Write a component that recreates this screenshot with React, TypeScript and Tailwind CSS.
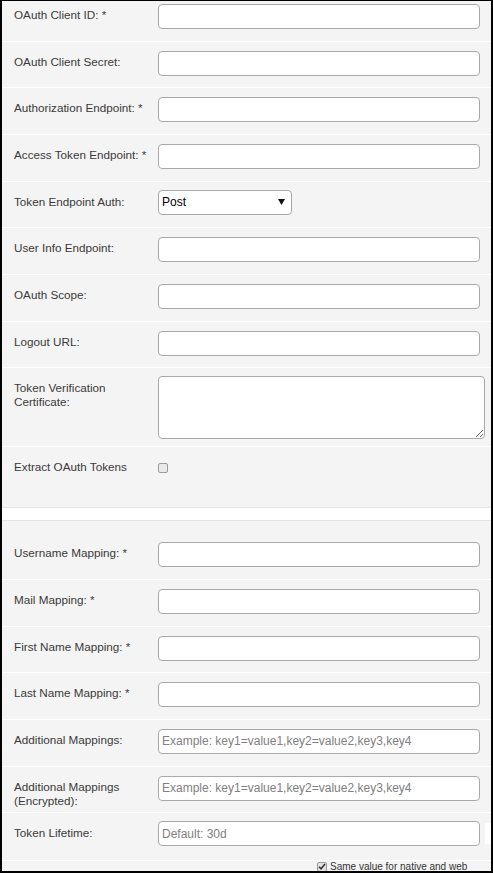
import React from "react";

type Field = {
  label: React.ReactNode;
  placeholder?: string;
};

const topFields: Field[] = [
  { label: "OAuth Client ID: *" },
  { label: "OAuth Client Secret:" },
  { label: "Authorization Endpoint: *" },
  { label: "Access Token Endpoint: *" },
];

const midFields: Field[] = [
  { label: "User Info Endpoint:" },
  { label: "OAuth Scope:" },
  { label: "Logout URL:" },
];

const mappingFields: Field[] = [
  { label: "Username Mapping: *" },
  { label: "Mail Mapping: *" },
  { label: "First Name Mapping: *" },
  { label: "Last Name Mapping: *" },
  {
    label: "Additional Mappings:",
    placeholder: "Example: key1=value1,key2=value2,key3,key4",
  },
  {
    label: (
      <>
        Additional Mappings
        <br />
        (Encrypted):
      </>
    ),
    placeholder: "Example: key1=value1,key2=value2,key3,key4",
  },
];

function Label({ children }: { children: React.ReactNode }) {
  return (
    <div className="w-[156px] shrink-0 pl-[12px] pr-2 pt-[13px] text-[11.7px] leading-[14px] text-[#3a3a3a]">
      {children}
    </div>
  );
}

function TextRow({ label, placeholder }: Field) {
  return (
    <div className="flex h-[46.67px] items-start border-b border-white">
      <Label>{label}</Label>
      <input
        type="text"
        placeholder={placeholder}
        className="mt-[9px] h-[25px] w-[322px] rounded-[4px] border border-[#a9a9a9] bg-white px-[3px] text-[12px] text-black outline-none placeholder:text-[#808080]"
      />
    </div>
  );
}

export default function App() {
  return (
    <div
      className="h-[873px] w-[493px] overflow-hidden border-b-2 border-l-2 border-r-2 border-t border-black bg-white"
      style={{ fontFamily: '"Liberation Sans", Arial, sans-serif' }}
    >
      <div className="-mt-[6px]">
        {/* first panel */}
        <section className="border-b border-[#e4e4e4] bg-[#f4f4f4]">
          {topFields.map((f, i) => (
            <TextRow key={i} {...f} />
          ))}

          <div className="flex h-[46.67px] items-start border-b border-white">
            <Label>Token Endpoint Auth:</Label>
            <div className="mt-[8px] flex h-[25px] w-[134px] items-center justify-between rounded-[4px] border border-[#a9a9a9] bg-white pl-[3px] pr-[6px] text-[12px] text-black">
              <span>Post</span>
              <svg width="7" height="6" viewBox="0 0 7 6">
                <path d="M0 0h7L3.5 6z" fill="#111" />
              </svg>
            </div>
          </div>

          {midFields.map((f, i) => (
            <TextRow key={i} {...f} />
          ))}

          <div className="flex h-[79px] items-start border-b border-white">
            <Label>
              Token Verification
              <br />
              Certificate:
            </Label>
            <textarea className="mt-[8px] h-[63px] w-[327px] resize rounded-[4px] border border-[#a9a9a9] bg-white text-[12px] outline-none" />
          </div>

          <div className="flex h-[60px] items-start">
            <Label>Extract OAuth Tokens</Label>
            <div className="mt-[16px] h-[10px] w-[10px] rounded-[2px] border border-[#9a9a9a] bg-[#e9e9e9]" />
          </div>
        </section>

        <div className="h-[12px] bg-white" />

        {/* second panel */}
        <section className="border-t border-[#e4e4e4] bg-[#f4f4f4] pt-[12px]">
          {mappingFields.map((f, i) => (
            <TextRow key={i} {...f} />
          ))}

          <div className="flex h-[46.67px] items-start">
            <Label>Token Lifetime:</Label>
            <input
              type="text"
              placeholder="Default: 30d"
              className="mt-[8px] h-[25px] w-[322px] rounded-[4px] border border-[#a9a9a9] bg-white px-[3px] text-[12px] outline-none placeholder:text-[#808080]"
            />
            <div className="ml-auto mt-[10px] h-[21px] w-[6px] bg-white" />
          </div>

          <div className="flex h-[20px] items-start border-t border-white pl-[315px]">
            <label className="flex items-center gap-[3px] bg-[#f4f4f4] pr-[12px] text-[10px] leading-[12px] text-[#333]">
              <span className="flex h-[10px] w-[10px] items-center justify-center rounded-[2px] border border-[#9a9a9a] bg-[#e4e4e4]">
                <svg width="8" height="7" viewBox="0 0 8 7">
                  <path
                    d="M1 3.8 3 5.8 7 1"
                    fill="none"
                    stroke="#333"
                    strokeWidth="1.6"
                  />
                </svg>
              </span>
              Same value for native and web
            </label>
          </div>
        </section>
      </div>
    </div>
  );
}
